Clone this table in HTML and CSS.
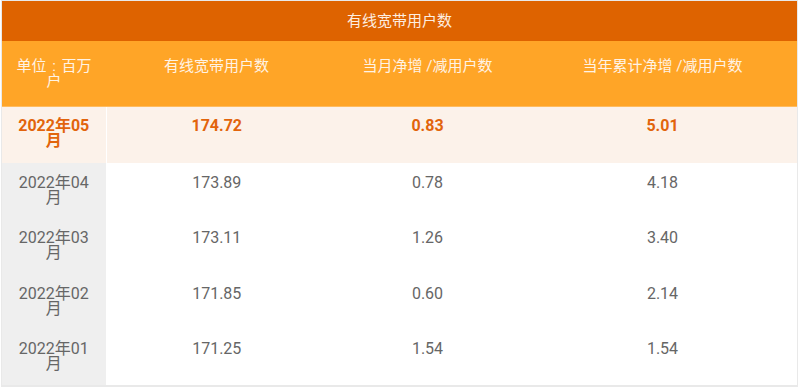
FILE: index.html
```html
<!DOCTYPE html>
<html lang="zh-CN">
<head>
<meta charset="utf-8">
<title>有线宽带用户数</title>
<link rel="stylesheet" href="styles.css">
</head>
<body>
<div class="panel">
  <div class="title">有线宽带用户数</div>
  <table class="grid">
    <colgroup>
      <col class="c1"><col class="c2"><col class="c3"><col class="c4">
    </colgroup>
    <thead>
      <tr class="head">
        <th class="first">单位<span class="colon">:</span>百万户</th>
        <th>有线宽带用户数</th>
        <th>当月净增 /减用户数</th>
        <th>当年累计净增 /减用户数</th>
      </tr>
    </thead>
    <tbody>
      <tr class="hl">
        <td class="first">2022年05月</td><td>174.72</td><td>0.83</td><td>5.01</td>
      </tr>
      <tr>
        <td class="first">2022年04月</td><td>173.89</td><td>0.78</td><td>4.18</td>
      </tr>
      <tr>
        <td class="first">2022年03月</td><td>173.11</td><td>1.26</td><td>3.40</td>
      </tr>
      <tr>
        <td class="first">2022年02月</td><td>171.85</td><td>0.60</td><td>2.14</td>
      </tr>
      <tr>
        <td class="first">2022年01月</td><td>171.25</td><td>1.54</td><td>1.54</td>
      </tr>
    </tbody>
  </table>
</div>
</body>
</html>
```

FILE: styles.css
```css
html, body {
  margin: 0;
  padding: 0;
  background: #ffffff;
}

body {
  font-family: Roboto, "Noto Sans CJK SC", sans-serif;
}

.panel {
  width: 795px;
  margin: 0 0 0 1px;
  border: 1px solid #e9e9e9;
  border-bottom-width: 2px;
}

.title {
  height: 40px;
  line-height: 40px;
  background: #de6300;
  color: #fdeee0;
  font-size: 15px;
  text-align: center;
}

.grid {
  width: 795px;
  table-layout: fixed;
  border-collapse: collapse;
  border-spacing: 0;
}

.c1 { width: 104px; }
.c2 { width: 221px; }
.c3 { width: 201px; }
.c4 { width: 269px; }

.head th {
  background: #ffa527;
  color: #fff3e4;
  font-weight: normal;
  font-size: 15px;
  line-height: 15px;
  padding: 18px 12px 17px;
  vertical-align: top;
  text-align: center;
  border-bottom: 1px solid #ffbc60;
}

.colon {
  display: inline-block;
  width: 1em;
  text-align: center;
}

.grid td {
  font-size: 16px;
  line-height: 15px;
  color: #666666;
  padding: 11.5px 12px 14px;
  vertical-align: top;
  text-align: center;
}

.grid td.first {
  background: #efefef;
  border-right: 1px solid #ffffff;
}

.grid tr.hl td {
  background: #fcf2ea;
  color: #e2640c;
  font-weight: bold;
  padding-top: 11px;
  padding-bottom: 15px;
}
```
